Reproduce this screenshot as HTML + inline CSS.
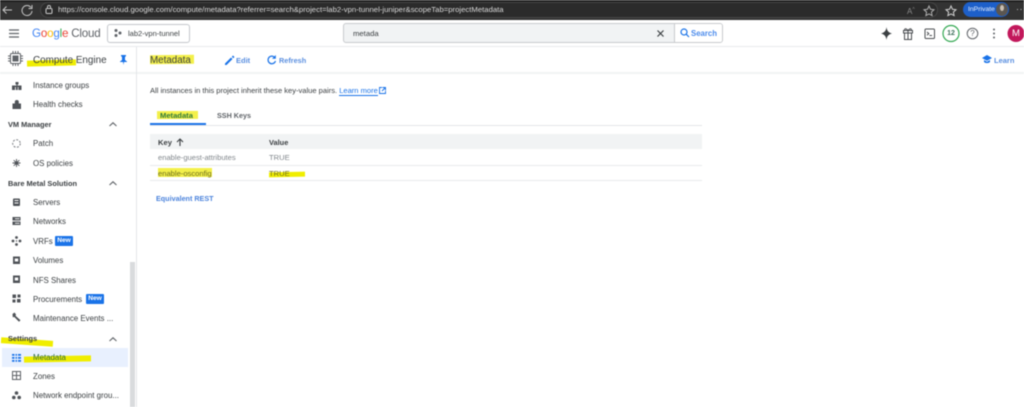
<!DOCTYPE html>
<html><head><meta charset="utf-8">
<style>
html,body{margin:0;padding:0;background:#fff}
#p{position:relative;width:1024px;height:407px;overflow:hidden;background:#fff;font-family:"Liberation Sans",sans-serif;color:#3c4043;filter:blur(.45px)}
.a{position:absolute;white-space:nowrap}
.t{position:absolute;white-space:nowrap;font-size:7.9px;line-height:12px;color:#3c4043;margin-top:1px}
.t.h{font-weight:700;color:#3c4043;font-size:7.4px}
.b{position:absolute;white-space:nowrap;color:#1a73e8;font-size:7.5px;line-height:12px;font-weight:700;margin-top:1px}
.y{position:absolute;background:#f0ee00}
.new{position:absolute;background:#1a73e8;color:#fff;font-size:6.6px;font-weight:700;width:18px;height:10px;line-height:10px;text-align:center;border-radius:1px}
svg{position:absolute;overflow:visible}
</style></head><body><div id="p">

<!-- browser bar -->
<div class="a" style="left:0;top:0;width:1024px;height:20px;background:#333"></div>
<div class="a" style="left:0;top:0;width:1024px;height:2px;background:#1f1f1f"></div>
<div class="a" style="left:40px;top:2px;width:898px;height:16px;border-radius:9px;background:#2b2b2b;border:1px solid #474747;box-sizing:border-box"></div>
<svg style="left:0;top:0" width="60" height="20" fill="none" stroke="#c8c8c8" stroke-width="1"><path d="M12 10H3M6.500 6.500 3 10l3.500 3.500"/><path d="M31 7.500A5 5 0 1 0 32 11M32 5v3.500h-3.500"/><rect x="46" y="8.500" width="6" height="5" rx="1"/><path d="M47.500 8.500V7a1.500 1.500 0 0 1 3 0v1.500"/></svg>
<div class="a" style="left:58px;top:4px;font-size:7.72px;line-height:12px;color:#d8d8d8">https://console.cloud.google.com/compute/metadata?referrer=search&amp;project=lab2-vpn-tunnel-juniper&amp;scopeTab=projectMetadata</div>
<div class="a" style="left:907px;top:5px;font-size:8px;line-height:10px;color:#8a8a8a">A<span style="font-size:5px;vertical-align:3px">^</span></div>
<svg style="left:923px;top:4px" width="60" height="14" fill="none" stroke="#b0b0b0" stroke-width="1"><path d="M6 2l1.500 3.300 3.500.4-2.600 2.400.7 3.500L6 9.900 2.900 11.600l.7-3.500L1 5.700l3.500-.4z"/><path stroke="#d0d0d0" d="M28 2l1.500 3.300 3.500.4-2.600 2.400.7 3.500L28 9.900l-3.100 1.700.7-3.500L23 5.700l3.500-.4z"/></svg>
<div class="a" style="left:963px;top:2px;width:46px;height:15px;border-radius:8px;background:#1d5fc9"></div>
<div class="a" style="left:968px;top:4px;font-size:6.8px;line-height:11px;color:#e8f0fe">InPrivate</div>
<div class="a" style="left:996px;top:3px;width:12px;height:13px;border-radius:50%;background:#5b5650"></div>
<div class="a" style="left:1000px;top:5px;width:4px;height:6px;border-radius:50%;background:#c9c0b4"></div>
<div class="a" style="left:1016px;top:4px;font-size:9px;line-height:10px;color:#ccc;letter-spacing:.5px">···</div>

<!-- top header -->
<div class="a" style="left:0;top:46px;width:1024px;height:1px;background:#e8eaed"></div>
<svg style="left:9px;top:29px" width="12" height="10" stroke="#5f6368" stroke-width="1.200"><path d="M0 1h10M0 4.500h10M0 8h10"/></svg>
<div class="a" style="left:32px;top:26px;font-size:11.6px;line-height:16px;letter-spacing:-.2px;color:#5f6368"><span style="color:#4285f4">G</span><span style="color:#ea4335">o</span><span style="color:#fbbc04">o</span><span style="color:#4285f4">g</span><span style="color:#34a853">l</span><span style="color:#ea4335">e</span> Cloud</div>
<div class="a" style="left:107px;top:24px;width:83px;height:19px;border:1px solid #c4c7cc;border-radius:3px;box-sizing:border-box"></div>
<svg style="left:114px;top:29px" width="9" height="9" fill="#5f6368"><circle cx="2" cy="1.500" r="1.500"/><circle cx="2" cy="6.500" r="1.500"/><circle cx="6" cy="4" r="1.500"/></svg>
<div class="t" style="left:128px;top:27px;font-size:7.5px">lab2-vpn-tunnel</div>

<!-- search -->
<div class="a" style="left:343px;top:23px;width:380px;height:20px;border:1px solid #c8cacd;border-radius:3px;box-sizing:border-box;background:#f1f3f4"></div>
<div class="a" style="left:674px;top:24px;width:48px;height:18px;background:#fff;border-left:1px solid #c8cacd;box-sizing:border-box;border-radius:0 2px 2px 0"></div>
<div class="t" style="left:353px;top:27px;font-size:7.7px">metada</div>
<svg style="left:657px;top:30px" width="8" height="8" stroke="#3c4043" stroke-width="1.200"><path d="M.5.500l6 6M6.500.500l-6 6"/></svg>
<svg style="left:680px;top:28px" width="10" height="10" fill="none" stroke="#1a73e8" stroke-width="1.200"><circle cx="4" cy="4" r="3"/><path d="M6.200 6.200 9 9"/></svg>
<div class="b" style="left:691px;top:27px;font-size:7.8px;color:#4b8bec">Search</div>

<!-- right icons -->
<svg style="left:880px;top:27px" width="140" height="16">
<path fill="#3c4043" d="M6.500 0C7 4 8.500 5.500 12 6.500 8.500 7.500 7 9 6.500 13 6 9 4.500 7.500 1 6.500 4.500 5.500 6 4 6.500 0z"/>
<g fill="none" stroke="#4a4d51" stroke-width="1" transform="translate(-1.500 0)"><rect x="25" y="3.500" width="9" height="2.500"/><path d="M26 6v6.500h7V6M29.500 3.500v9M29.500 3.500c-3-3.500-4.500-.5-2.500 0M29.500 3.500c3-3.500 4.500-.5 2.500 0"/></g>
<g fill="none" stroke="#4a4d51" stroke-width="1"><rect x="45" y="2" width="9.500" height="9.500" rx="1"/><path d="M47 5l1.800 1.600L47 8.300M49.500 8.500H52"/></g>
<circle cx="71" cy="6.500" r="8" fill="none" stroke="#34a853" stroke-width="1.200"/>
<circle cx="92.500" cy="6.500" r="5.300" fill="none" stroke="#5f6368" stroke-width="1"/>
<g fill="#5f6368"><circle cx="114" cy="2.500" r="1"/><circle cx="114" cy="6.500" r="1"/><circle cx="114" cy="10.500" r="1"/></g>
<circle cx="136" cy="6.500" r="8.500" fill="#c2185b"/>
</svg>
<div class="a" style="left:945px;top:28px;width:12px;text-align:center;font-size:7px;line-height:12px;font-weight:700;color:#3c6e5a">12</div>
<div class="a" style="left:968px;top:28px;width:9px;text-align:center;font-size:8px;line-height:12px;color:#5f6368">?</div>
<div class="a" style="left:1008px;top:27px;width:16px;text-align:center;font-size:9.5px;line-height:14px;color:#fff">M</div>

<!-- secondary header -->
<div class="a" style="left:0;top:72px;width:1024px;height:2px;background:#f1f3f4"></div>
<div class="a" style="left:136px;top:47px;width:1px;height:360px;background:#e4e6e8"></div>

<div class="y" style="left:27px;top:60px;width:49px;height:6px;transform:rotate(-1.500deg)"></div>
<svg style="left:8px;top:51px" width="16" height="16" fill="none" stroke="#5f6368" stroke-width="1"><rect x="2.500" y="2.500" width="10" height="10" rx="1"/><rect x="5" y="5" width="5" height="5" fill="#5f6368"/><path d="M5 0v2M7.500 0v2M10 0v2M5 13v2M7.500 13v2M10 13v2M0 5h2M0 7.500h2M0 10h2M13 5h2M13 7.500h2M13 10h2"/></svg>
<div class="a" style="left:33px;top:53px;font-size:9.9px;line-height:15px;color:#3c4043">Compute Engine</div>
<svg style="left:119px;top:55px" width="9" height="10" fill="#1a73e8"><path d="M2 0h5v1L6 2v3l2 1.500V7H5L4.500 10 4 7H1v-.5L3 5V2L2 1z"/></svg>

<div class="y" style="left:150px;top:55px;width:44px;height:9px;transform:rotate(-.5deg);background:#f3f04a"></div>
<div class="a" style="left:150px;top:53px;font-size:9.8px;line-height:15px;color:#3c4043">Metadata</div>
<svg style="left:225px;top:55px" width="10" height="10" fill="#1a73e8"><path d="M0 8.500 6 2.500l1.500 1.500L1.500 10H0zM6.800 1.700 8 .5 9.500 2 8.300 3.200z"/></svg>
<div class="b" style="left:236px;top:54px;color:#5a8fe0">Edit</div>
<svg style="left:267px;top:55px" width="10" height="10" fill="none" stroke="#1a73e8" stroke-width="1.300"><path d="M7.500 2.200A3.800 3.800 0 1 0 8.500 6"/><path fill="#1a73e8" stroke="none" d="M8.800 0v3.800H5z"/></svg>
<div class="b" style="left:279px;top:54px;color:#5a8fe0;font-size:7.3px">Refresh</div>
<svg style="left:982px;top:55px" width="11" height="9" fill="#1a73e8"><path d="M5 0 10 3 5 5.800 0 3z"/><path d="M2 5v2c1.500 1.500 4.500 1.500 6 0V5L5 6.800z"/></svg>
<div class="b" style="left:994px;top:54px;color:#5a8fe0">Learn</div>

<!-- sidebar -->
<svg style="left:11px;top:80px" width="12" height="88" fill="#4f5358">
<path d="M4.500 2h3v2.500H6.500V5.500H10.500V10H7.500V7H6.800v3H4.800V7H4v3H1V5.500H5.500V4.500H4.500z"/>
<path d="M1.500 23.500h8.500V29H1.500zM3.800 23.500V22a2 2 0 0 1 4 0v1.500" />
<circle cx="5.500" cy="63.500" r="3.800" fill="none" stroke="#7a7e83" stroke-dasharray="2 1.500"/>
<circle cx="5.500" cy="83" r="1.800"/><path stroke="#4f5358" stroke-width=".9" d="M5.500 79v8M1.500 83h8M2.700 80.200l5.600 5.600M8.300 80.200l-5.600 5.600"/>
</svg>
<div class="t" style="left:33px;top:79px">Instance groups</div>
<div class="t" style="left:33px;top:98px">Health checks</div>
<div class="t h" style="left:8px;top:118px">VM Manager</div>
<div class="t" style="left:33px;top:137px">Patch</div>
<div class="t" style="left:33px;top:157px">OS policies</div>
<div class="t h" style="left:8px;top:177px">Bare Metal Solution</div>
<svg style="left:109px;top:122px" width="8" height="5" fill="none" stroke="#5f6368" stroke-width="1.100"><path d="M.5 4 4 .8 7.500 4"/></svg>
<svg style="left:109px;top:181px" width="8" height="5" fill="none" stroke="#5f6368" stroke-width="1.100"><path d="M.5 4 4 .8 7.500 4"/></svg>
<svg style="left:109px;top:337px" width="8" height="5" fill="none" stroke="#5f6368" stroke-width="1.100"><path d="M.5 4 4 .8 7.500 4"/></svg>

<svg style="left:11px;top:196px" width="12" height="200" fill="#4f5358">
<rect x="2" y="2.500" width="7" height="7.500" rx="1"/><rect x="3.500" y="4" width="4" height="1" fill="#fff"/><rect x="3.500" y="6.500" width="4" height="1" fill="#fff"/>
<rect x="1.500" y="21" width="8" height="3.500"/><rect x="1.500" y="25.500" width="8" height="3.500"/><rect x="4" y="22.300" width="4.500" height=".9" fill="#fff"/><rect x="4" y="26.800" width="4.500" height=".9" fill="#fff"/>
<g><circle cx="5.500" cy="41.500" r="1.400"/><circle cx="5.500" cy="48.500" r="1.400"/><circle cx="2" cy="45" r="1.400"/><circle cx="9" cy="45" r="1.400"/><circle cx="5.500" cy="45" r=".7"/></g>
<rect x="2" y="60.500" width="7" height="7.500"/><rect x="3.800" y="62.500" width="3.400" height="3" fill="#fff"/>
<rect x="2" y="79.500" width="7" height="7.500"/><rect x="3.800" y="81.500" width="3.400" height="3" fill="#fff"/>
<rect x="1.500" y="98.500" width="3.500" height="3.500"/><rect x="6.500" y="98.500" width="3" height="3"/><rect x="1.500" y="103.500" width="3" height="3"/><rect x="6" y="103" width="3.500" height="3.500"/>
<path d="M1.500 118 3.500 116.500l1.500 2-.5 1.300 5 4.500-1.500 1.500-4.700-4.800-1.500.3z"/>
</svg>
<div class="t" style="left:33px;top:196px">Servers</div>
<div class="t" style="left:33px;top:215px">Networks</div>
<div class="t" style="left:33px;top:235px">VRFs</div>
<div class="new" style="left:55px;top:236px">New</div>
<div class="t" style="left:33px;top:254px">Volumes</div>
<div class="t" style="left:33px;top:274px">NFS Shares</div>
<div class="t" style="left:33px;top:293px">Procurements</div>
<div class="new" style="left:86px;top:294px">New</div>
<div class="t" style="left:33px;top:312px">Maintenance Events ...</div>

<div class="a" style="left:2px;top:348px;width:126px;height:19px;background:#e8f0fe"></div>
<div class="y" style="left:1px;top:339px;width:52px;height:6px;transform:rotate(4deg)"></div>
<div class="t h" style="left:8px;top:332px">Settings</div>
<div class="y" style="left:24px;top:356px;width:67px;height:6px;transform:rotate(-1deg)"></div>
<svg style="left:12px;top:353px" width="10" height="10" fill="#1a73e8"><path d="M0 1h2.500v1.800H0zM3.500 1H5v1.800H3.500zM6 1h3v1.800H6zM0 4h2.500v1.800H0zM3.500 4H5v1.800H3.500zM6 4h3v1.800H6zM0 7h2.500v1.800H0zM3.500 7H5v1.800H3.500zM6 7h3v1.800H6z"/></svg>
<div class="t" style="left:33px;top:351px;color:#2a6a3a">Metadata</div>
<svg style="left:12px;top:371px" width="10" height="10" fill="none" stroke="#5f6368" stroke-width="1"><rect x=".5" y=".5" width="8" height="8"/><path d="M4.500 .5v8M.5 4.500h8"/></svg>
<div class="t" style="left:33px;top:370px">Zones</div>
<svg style="left:12px;top:391px" width="10" height="9" fill="#4f5358"><circle cx="4.500" cy="2" r="1.800"/><circle cx="1.800" cy="6.500" r="1.800"/><circle cx="7.200" cy="6.500" r="1.800"/></svg>
<div class="t" style="left:33px;top:389px">Network endpoint grou...</div>
<div class="a" style="left:130px;top:262px;width:5px;height:145px;background:#d9dbdd"></div>

<!-- content -->
<div class="t" style="left:150px;top:84px;font-size:7.55px">All instances in this project inherit these key-value pairs. <span style="color:#1a73e8;border-bottom:1px solid #1a73e8">Learn more</span></div>
<svg style="left:379px;top:87px" width="7" height="7" fill="none" stroke="#1a73e8" stroke-width=".9"><path d="M3 .5H.5v6h6V4M3.500.5h3v3M6.500.5 3 4"/></svg>

<div class="y" style="left:157px;top:111px;width:41px;height:8px;background:#f3f04a;transform:rotate(-.5deg)"></div>
<div class="t" style="left:160px;top:109px;font-weight:700;font-size:7.6px;color:#2f7a3d">Metadata</div>
<div class="t" style="left:217px;top:109px;font-weight:700;font-size:7.2px;color:#5f6368">SSH Keys</div>
<div class="a" style="left:150px;top:125px;width:552px;height:1px;background:#e3e5e8"></div>
<div class="a" style="left:150px;top:123px;width:56px;height:2px;background:#1a73e8"></div>

<div class="a" style="left:150px;top:134px;width:552px;height:15px;background:#f1f3f4"></div>
<div class="t" style="left:158px;top:136px;font-weight:700;font-size:7.6px">Key</div>
<svg style="left:176px;top:138px" width="8" height="8" fill="none" stroke="#3c4043" stroke-width="1.100"><path d="M4 8V1M1 4 4 1l3 3"/></svg>
<div class="t" style="left:269px;top:136px;font-weight:700;font-size:7.4px">Value</div>
<div class="a" style="left:150px;top:165px;width:552px;height:1px;background:#e8eaed"></div>
<div class="a" style="left:150px;top:180px;width:552px;height:1px;background:#e8eaed"></div>
<div class="t" style="left:158px;top:151px;color:#80868b;font-size:7.6px">enable-guest-attributes</div>
<div class="t" style="left:269px;top:151px;color:#80868b;font-size:7.6px">TRUE</div>
<div class="y" style="left:158px;top:168px;width:54px;height:9px;background:#f3f04a"></div>
<div class="t" style="left:158px;top:167px;color:#6f6f20;font-size:7.6px">enable-osconfig</div>
<div class="y" style="left:269px;top:172px;width:36px;height:5px;transform:rotate(-1deg)"></div>
<div class="t" style="left:269px;top:167px;color:#6f6f20;font-size:7.6px">TRUE</div>
<div class="b" style="left:156px;top:192px;font-size:7.2px;color:#4b83dc">Equivalent REST</div>

</div></body></html>
